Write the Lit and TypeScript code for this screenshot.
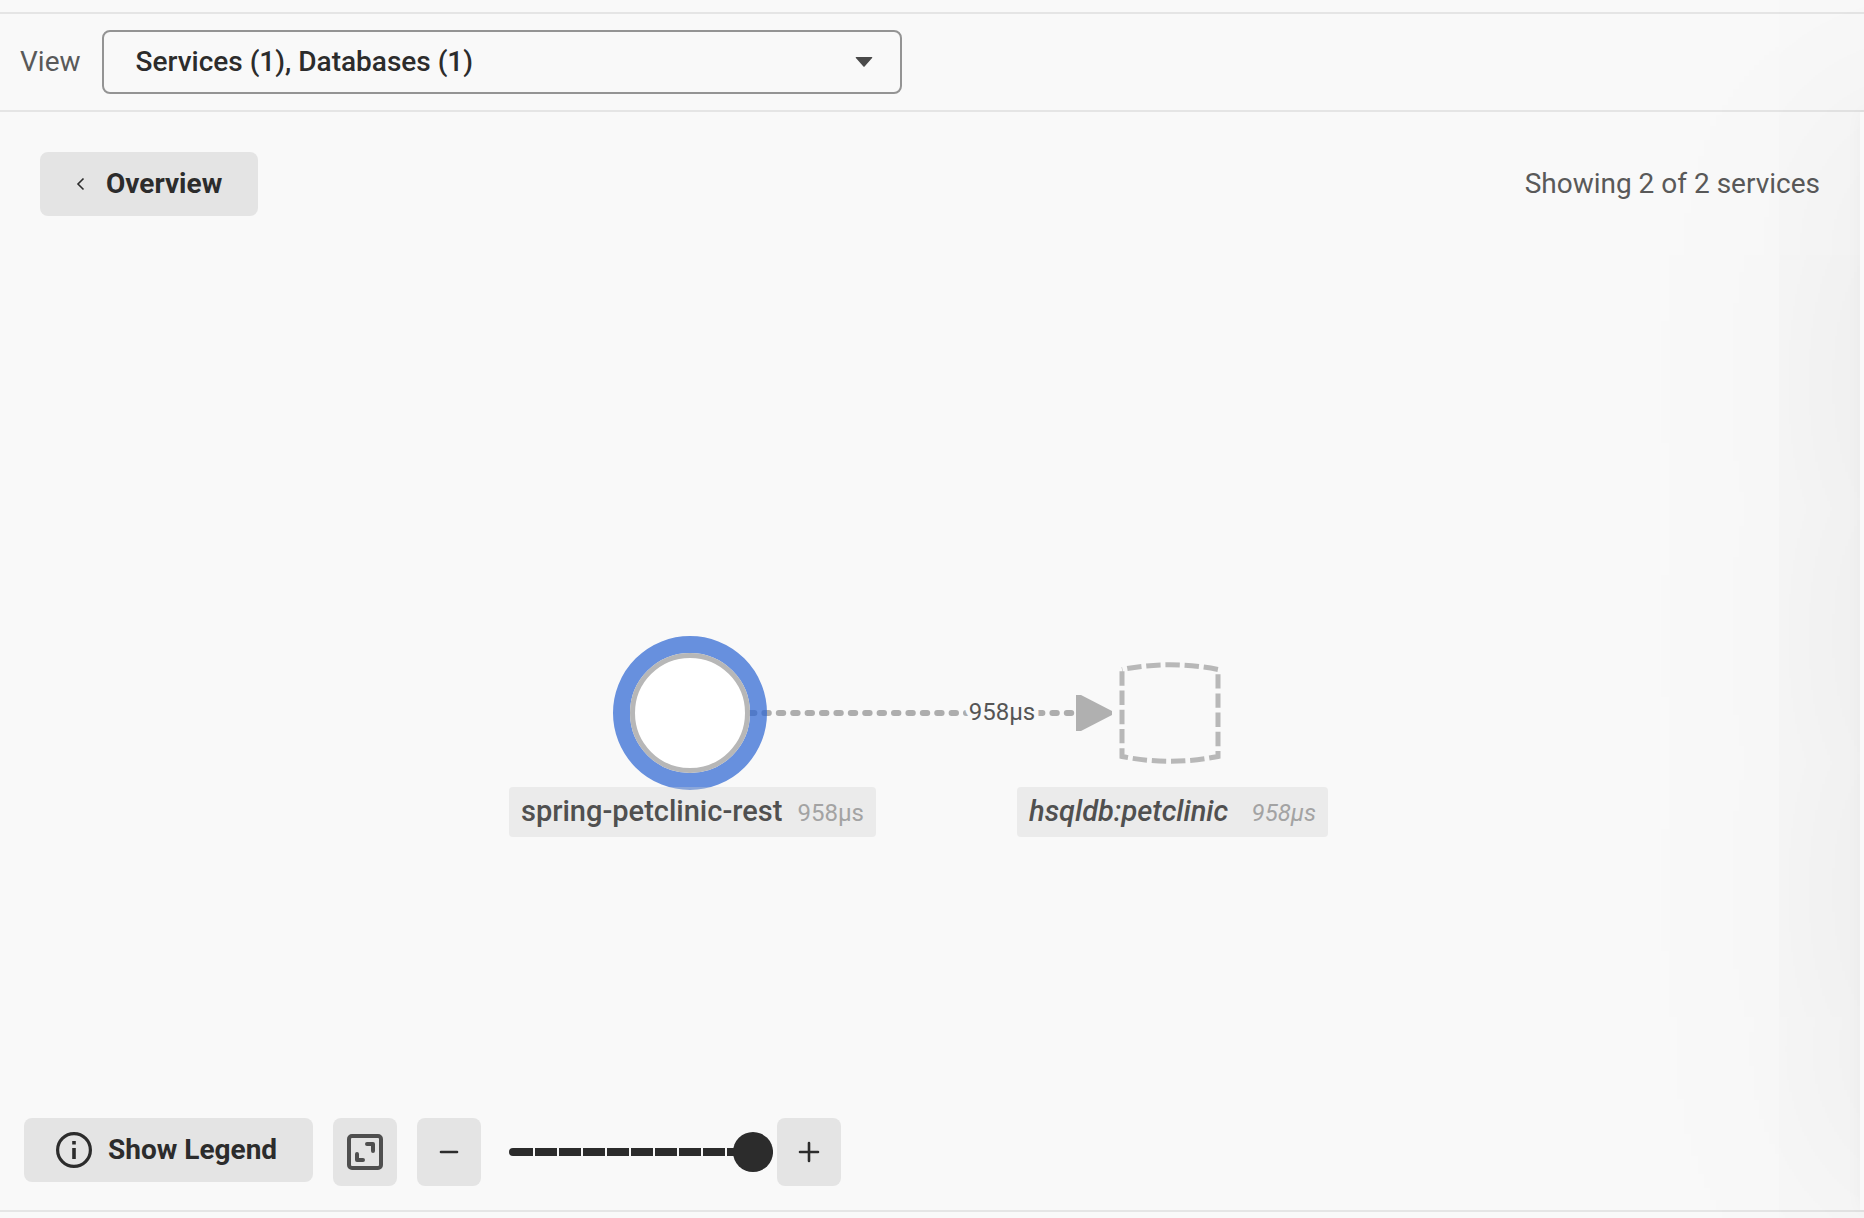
import { LitElement, html, svg, css } from "lit";
import { customElement, state } from "lit/decorators.js";
import { classMap } from "lit/directives/class-map.js";
import { styleMap } from "lit/directives/style-map.js";

interface ServiceLabel {
  name: string;
  latency: string;
  inferred: boolean;
  left: number;
  width: number;
}

const LABELS: ServiceLabel[] = [
  { name: "spring-petclinic-rest", latency: "958µs", inferred: false, left: 9, width: 367 },
  { name: "hsqldb:petclinic", latency: "958µs", inferred: true, left: 517, width: 311 },
];

/** Graph of the services, with the call edge between them. */
@customElement("service-map")
export class ServiceMap extends LitElement {
  static styles = css`
    :host {
      display: block;
      position: relative;
      width: 860px;
      height: 204px;
    }
    .graph {
      display: block;
      width: 100%;
      height: 100%;
      overflow: visible;
    }
    .edge {
      stroke: #adadad;
      stroke-width: 6;
      stroke-linecap: round;
      stroke-dasharray: 4.4 10;
    }
    .arrow {
      fill: #b0b0b0;
    }
    .ring {
      fill: none;
      stroke: rgba(46, 102, 210, 0.72);
      stroke-width: 17;
    }
    .service {
      fill: #ffffff;
      stroke: #b7b7b7;
      stroke-width: 5;
    }
    .database {
      fill: none;
      stroke: #b8b8b8;
      stroke-width: 5;
      stroke-dasharray: 14.4 4.8;
      stroke-dashoffset: -5.3;
    }
    .edge-label {
      font-size: 24px;
      fill: #555555;
      stroke: #f9f9f9;
      stroke-width: 9;
      paint-order: stroke;
      text-anchor: middle;
    }
    .label {
      position: absolute;
      top: 151px;
      box-sizing: border-box;
      display: flex;
      align-items: baseline;
      justify-content: space-between;
      height: 50px;
      padding: 0 12px;
      border-radius: 4px;
      background: rgba(209, 209, 209, 0.34);
      font-size: 29px;
      font-weight: 500;
      line-height: 48px;
      color: #505050;
      white-space: nowrap;
    }
    .inferred {
      font-style: italic;
    }
    .latency {
      font-size: 24px;
      font-weight: 400;
      color: #a3a3a3;
    }
  `;

  render() {
    return html`
      <svg class="graph" viewBox="0 0 860 204" role="img" aria-label="Service map">
        ${svg`
          <line class="edge" x1="250" y1="77" x2="576" y2="77" />
          <polygon class="arrow" points="576,59 581,59 612,75 612,79 581,95 576,95" />
          <text class="edge-label" x="502" y="84">958µs</text>
          <circle class="ring" cx="190" cy="77" r="68.5" />
          <circle class="service" cx="190" cy="77" r="57.5" />
          <path class="database" d="M622 33.5 Q670 24 718 33.5 V120.5 Q670 130 622 120.5 Z" />
        `}
      </svg>
      ${LABELS.map(
        (l) => html`
          <div
            class=${classMap({ label: true, inferred: l.inferred })}
            style=${styleMap({ left: `${l.left}px`, width: `${l.width}px` })}
          >
            <span>${l.name}</span>
            <span class="latency">${l.latency}</span>
          </div>
        `,
      )}
    `;
  }
}

@customElement("app-root")
export class AppRoot extends LitElement {
  static styles = css`
    :host {
      display: flex;
      flex-direction: column;
      box-sizing: border-box;
      min-height: 100vh;
      padding: 12px 0 6px;
      overflow: hidden;
      background: #f9f9f9;
      color: #2c2c2c;
      font-family: Roboto, "Liberation Sans", sans-serif;
      font-size: 28px;
      line-height: 32px;
    }
    .filters {
      display: flex;
      align-items: center;
      gap: 21px;
      padding: 16px 20px;
      border-top: 2px solid #e5e5e5;
      border-bottom: 2px solid #e5e5e5;
    }
    .muted {
      color: #595959;
    }
    .picker {
      flex: 0 1 800px;
      display: grid;
      align-items: center;
    }
    .picker > * {
      grid-area: 1 / 1;
    }
    .select {
      appearance: none;
      width: 100%;
      height: 64px;
      padding: 0 64px 0 32px;
      border: 2px solid #949494;
      border-radius: 8px;
      background: transparent;
      color: inherit;
      font: inherit;
      font-weight: 500;
    }
    .caret {
      justify-self: end;
      width: 18px;
      height: 10px;
      margin-right: 29px;
      fill: #4a4a4a;
      pointer-events: none;
    }
    .body {
      flex: 1;
      display: flex;
      border-bottom: 2px solid #e5e5e5;
    }
    .canvas {
      flex: 1;
      display: flex;
      flex-direction: column;
    }
    .side {
      position: relative;
      flex: 0 0 4px;
    }
    /* The side panel runs past the window edge; only its shadow and first pixels show. */
    .side::before {
      content: "";
      position: absolute;
      inset: 0 auto 0 0;
      width: 600px;
      background: #f9f9f9;
      box-shadow: 0 0 260px rgba(0, 0, 0, 0.1), 0 0 16px rgba(0, 0, 0, 0.03);
      pointer-events: none;
    }
    .heading {
      display: flex;
      align-items: center;
      justify-content: space-between;
      padding: 40px 40px 0;
    }
    .stage {
      flex: 1;
      display: flex;
      align-items: center;
      justify-content: center;
      padding-top: 142px;
    }
    .controls {
      display: flex;
      align-items: flex-start;
      gap: 20px;
      padding: 0 24px 24px;
    }
    .button {
      display: inline-flex;
      align-items: center;
      height: 64px;
      padding: 0 36px 0 32px;
      border: 0;
      border-radius: 8px;
      background: #e4e4e4;
      color: inherit;
      font: inherit;
      font-weight: 700;
      cursor: pointer;
    }
    .back {
      gap: 18px;
    }
    .legend {
      gap: 16px;
    }
    .square {
      justify-content: center;
      width: 64px;
      height: 68px;
      padding: 0;
    }
    .fit {
      color: #4f4f4f;
    }
    .icon {
      display: block;
      fill: none;
      stroke: currentColor;
    }
    .zoom {
      display: flex;
      align-items: center;
      gap: 4px;
      margin-left: 8px;
    }
    .slider {
      appearance: none;
      width: 264px;
      height: 40px;
      margin: 0;
      background: transparent;
    }
    .slider::-webkit-slider-runnable-track {
      height: 8px;
      border-radius: 4px;
      background:
        linear-gradient(#2c2c2c, #2c2c2c) 0 0 / 24px 100% no-repeat,
        repeating-linear-gradient(to right, #f9f9f9 0 2px, #2c2c2c 2px 24px);
    }
    .slider::-webkit-slider-thumb {
      appearance: none;
      width: 40px;
      height: 40px;
      margin-top: -16px;
      border-radius: 50%;
      background: #2c2c2c;
    }
  `;

  @state() private zoom = 10;

  private step(delta: number) {
    this.zoom = Math.min(10, Math.max(0, this.zoom + delta));
  }

  private onSlide(e: Event) {
    this.zoom = Number((e.target as HTMLInputElement).value);
  }

  render() {
    return html`
      <header class="filters">
        <label class="muted" for="view">View</label>
        <div class="picker">
          <select class="select" id="view">
            <option>Services (1), Databases (1)</option>
          </select>
          <svg class="caret" viewBox="0 0 18 10" aria-hidden="true">
            <path d="M1.2 0h15.6q.9 0 .3.9L9.6 9.5q-.6.7-1.2 0L.9.9Q.3 0 1.2 0z" />
          </svg>
        </div>
      </header>
      <main class="body">
        <section class="canvas">
          <div class="heading">
            <button class="button back">
              <svg class="icon" width="16" height="16" viewBox="0 0 16 16" stroke-width="1.6" aria-hidden="true">
                <path d="M11.5 2.5 6 8l5.5 5.5" />
              </svg>
              Overview
            </button>
            <span class="muted">Showing 2 of 2 services</span>
          </div>
          <div class="stage"><service-map></service-map></div>
          <div class="controls">
            <button class="button legend">
              <svg class="icon" width="36" height="36" viewBox="0 0 36 36" stroke-width="3.2" aria-hidden="true">
                <circle cx="18" cy="18" r="16.4" />
                <path d="M18 9v3.6M18 16v11" stroke-width="3.6" />
              </svg>
              Show Legend
            </button>
            <button class="button square fit" aria-label="Fit to screen">
              <svg class="icon" width="36" height="36" viewBox="0 0 36 36" stroke-width="4" aria-hidden="true">
                <rect x="2" y="2" width="32" height="32" rx="3" />
                <path d="M20 10h6v7" stroke-linecap="round" stroke-linejoin="round" />
                <path d="M10 20v6h6" stroke-linecap="round" stroke-linejoin="round" />
              </svg>
            </button>
            <button class="button square" aria-label="Zoom out" @click=${() => this.step(-1)}>
              <svg class="icon" width="24" height="24" viewBox="0 0 24 24" stroke-width="2.6" stroke-linecap="round" aria-hidden="true">
                <path d="M4 12h16" />
              </svg>
            </button>
            <div class="zoom">
              <input
                class="slider"
                type="range"
                min="0"
                max="10"
                aria-label="Zoom level"
                .value=${String(this.zoom)}
                @input=${this.onSlide}
              />
              <button class="button square" aria-label="Zoom in" @click=${() => this.step(1)}>
                <svg class="icon" width="24" height="24" viewBox="0 0 24 24" stroke-width="2.6" stroke-linecap="round" aria-hidden="true">
                  <path d="M3 12h18M12 3v18" />
                </svg>
              </button>
            </div>
          </div>
        </section>
        <aside class="side"></aside>
      </main>
    `;
  }
}
